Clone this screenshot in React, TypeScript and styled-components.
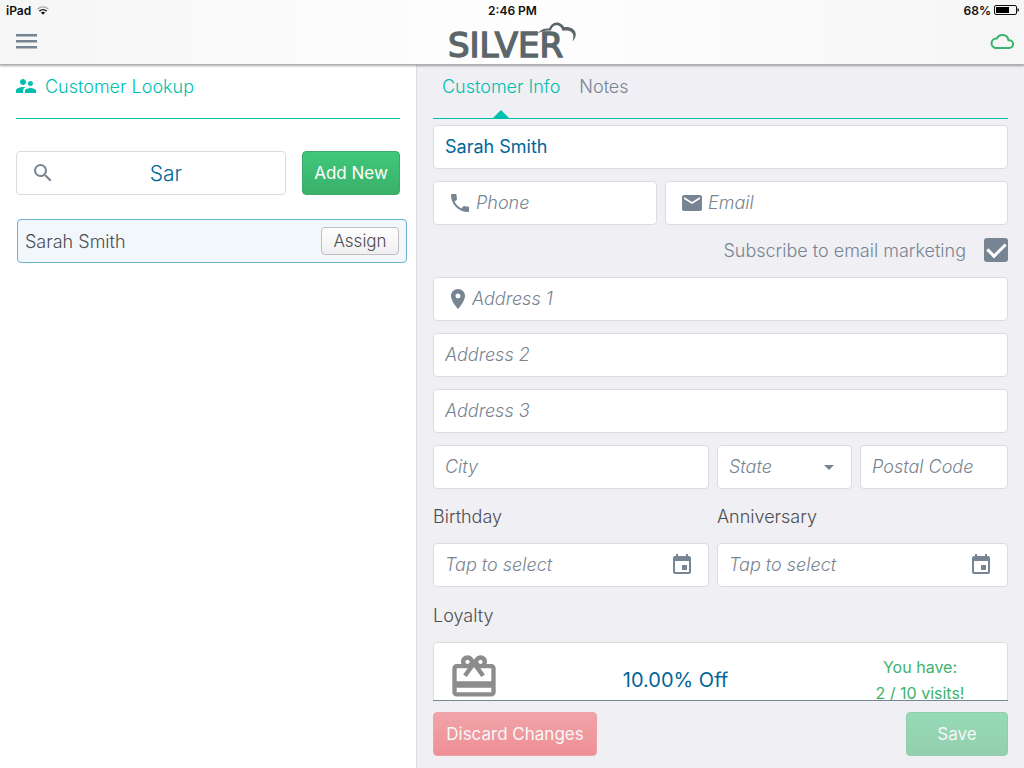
import React, { useState } from "react";
import styled, { createGlobalStyle, css } from "styled-components";
import {
  MdSupervisorAccount,
  MdSearch,
  MdPhone,
  MdEmail,
  MdLocationOn,
  MdArrowDropDown,
  MdEvent,
  MdCardGiftcard,
} from "react-icons/md";

const teal = "#00bfae";
const slate = "#778592";
const blue = "#006699";
const green = "#3bb36d";
const ink = "#4d4d52";
const paper = "#efeff4";
const line = "#dcdcdf";

const GlobalStyle = createGlobalStyle`
  * { box-sizing: border-box; }
  body { margin: 0; background: #fff; }
  body, button, input, select { font-family: Inter, "Liberation Sans", sans-serif; }
`;

const Page = styled.div`
  display: flex;
  flex-direction: column;
  height: 100vh;
  color: ${ink};
  font-size: 18px;
  font-weight: 300;
`;

const Header = styled.header`
  z-index: 1;
  background: linear-gradient(90deg, #f6f6f6, #fefefe 50%, #f6f6f6);
  border-bottom: 1px solid #b0b0b4;
  box-shadow: 0 1px 2px rgba(0, 0, 0, 0.35);
`;

const StatusBar = styled.div`
  display: grid;
  grid-template-columns: 1fr auto 1fr;
  align-items: center;
  height: 20px;
  padding: 0 5px 0 6px;
  color: #111;
  font-size: 12px;
  font-weight: 600;
`;

const StatusGroup = styled.div<{ $end?: boolean }>`
  display: flex;
  align-items: center;
  gap: ${(p) => (p.$end ? 3 : 6)}px;
  justify-content: ${(p) => (p.$end ? "flex-end" : "flex-start")};
`;

const NavBar = styled.div`
  display: grid;
  grid-template-columns: 1fr auto 1fr;
  align-items: center;
  height: 44px;
  padding: 0 10px 2px;
`;

const MenuButton = styled.button`
  display: flex;
  flex-direction: column;
  gap: 3px;
  width: 21px;
  margin-left: 6px;
  padding: 0;
  border: 0;
  background: none;
`;

const MenuLine = styled.span`
  height: 3px;
  border-bottom: 1px solid #b4bcc4;
  background: ${slate};
`;

const LogoMark = styled.svg`
  display: block;
  overflow: visible;
  font-family: "DejaVu Sans", Inter, sans-serif;
  font-size: 34px;
  font-weight: 400;
`;

const CloudStatus = styled.svg`
  justify-self: end;
`;

const Main = styled.main`
  display: grid;
  grid-template-columns: minmax(0, 417fr) minmax(0, 607fr);
  flex: 1;
  min-height: 0;
`;

const LookupPane = styled.section`
  padding: 0 16px;
  background: #fff;
  border-right: 1px solid ${line};
`;

const PaneTitle = styled.h1`
  display: flex;
  align-items: center;
  gap: 9px;
  height: 54px;
  margin: 0;
  padding-bottom: 11px;
  border-bottom: 1px solid ${teal};
  color: ${teal};
  font-size: 18px;
  font-weight: 300;
`;

const SearchRow = styled.div`
  display: flex;
  gap: 16px;
  margin: 32px 0 24px;
`;

const fieldBox = css`
  height: 44px;
  min-width: 0;
  border: 1px solid ${line};
  border-radius: 4px;
  background: #fff;
`;

const SearchField = styled.label`
  ${fieldBox}
  display: flex;
  flex: 1;
  align-items: center;
  gap: 4px;
  padding: 0 12px 0 14px;
  color: ${slate};
  svg { flex: none; }
`;

const SearchInput = styled.input`
  flex: 1;
  width: 100%;
  min-width: 0;
  padding: 0;
  border: 0;
  outline: 0;
  background: none;
  color: ${blue};
  font-size: 21px;
  font-weight: 300;
  text-align: center;
`;

const ActionButton = styled.button<{ $tone: "green" | "red"; $width: number; $faded?: boolean }>`
  width: ${(p) => p.$width}px;
  height: 44px;
  padding: 0;
  border: 1px solid ${(p) => (p.$tone === "green" ? "#3aaa66" : "#f0565a")};
  border-radius: 4px;
  background: ${(p) =>
    p.$tone === "green"
      ? "linear-gradient(#3ec87a, #3bb06a)"
      : "linear-gradient(#f25b5f, #ee3338)"};
  color: #fff;
  font-size: 17px;
  font-weight: 400;
  opacity: ${(p) => (p.$faded ? 0.5 : 1)};
`;

const ResultRow = styled.div`
  display: flex;
  align-items: center;
  justify-content: space-between;
  height: 44px;
  margin: 0 -7px 0 1px;
  padding: 0 7px;
  border: 1px solid #6cb2d0;
  border-radius: 4px;
  background: #f2f7fc;
`;

const AssignButton = styled.button`
  width: 78px;
  height: 28px;
  padding: 0;
  border: 1px solid #bfbfc3;
  border-radius: 4px;
  background: linear-gradient(#fff, #efefef);
  color: ${ink};
  font-size: 17px;
  font-weight: 300;
`;

const InfoPane = styled.section`
  display: flex;
  flex-direction: column;
  min-height: 0;
  padding: 0 16px 12px;
  background: ${paper};
`;

const Tabs = styled.nav`
  display: flex;
  flex: none;
  gap: 19px;
  height: 54px;
  padding-left: 9px;
  border-bottom: 1px solid ${teal};
`;

const Tab = styled.button<{ $active?: boolean }>`
  position: relative;
  padding: 0 0 11px;
  border: 0;
  background: none;
  color: ${(p) => (p.$active ? teal : slate)};
  font-size: 18px;
  font-weight: 300;
  ${(p) =>
    p.$active &&
    css`
      &::after {
        content: "";
        position: absolute;
        bottom: 0;
        left: calc(50% - 8px);
        border: 8px solid transparent;
        border-top-width: 0;
        border-bottom-color: ${teal};
      }
    `}
`;

const FormScroll = styled.form`
  flex: 1;
  min-height: 0;
  padding-top: 6px;
  overflow-y: auto;
  scrollbar-width: none;
  border-bottom: 1px solid ${slate};
`;

const Row = styled.div<{ $columns?: string }>`
  display: grid;
  grid-template-columns: ${(p) => p.$columns ?? "1fr"};
  gap: 8px;
  margin-bottom: 12px;
`;

const Field = styled.label<{ $icon?: boolean }>`
  ${fieldBox}
  display: flex;
  align-items: center;
  gap: 4px;
  padding: 0 14px 0 ${(p) => (p.$icon ? 14 : 11)}px;
  color: ${slate};
  svg { flex: none; }
`;

const PinIcon = styled(MdLocationOn)`
  width: 20px;
  height: 24px;
`;

const TextInput = styled.input`
  flex: 1;
  width: 100%;
  min-width: 0;
  padding: 0 0 2px;
  border: 0;
  outline: 0;
  background: none;
  color: ${blue};
  font-size: 18px;
  font-weight: 400;
  &::placeholder {
    color: ${slate};
    font-style: italic;
    font-weight: 300;
    opacity: 1;
  }
`;

const StateSelect = styled.select`
  flex: 1;
  min-width: 0;
  padding: 0 0 2px;
  border: 0;
  outline: 0;
  appearance: none;
  background: none;
  color: ${slate};
  font-size: 18px;
  font-style: italic;
  font-weight: 300;
`;

const StateField = styled(Field)`
  padding-right: 10px;
`;

const PostalField = styled(Field)`
  padding-right: 4px;
`;

const Subscribe = styled.label`
  display: flex;
  align-items: center;
  justify-content: flex-end;
  gap: 18px;
  height: 26px;
  margin-bottom: 14px;
  color: ${slate};
`;

const CheckBox = styled.input`
  appearance: none;
  display: grid;
  place-items: center;
  width: 24px;
  height: 24px;
  margin: 0;
  border-radius: 3px;
  background: ${slate};
  &:checked::before {
    content: "";
    width: 8px;
    height: 15px;
    margin-bottom: 5px;
    border: solid #fff;
    border-width: 0 3px 3px 0;
    transform: rotate(45deg);
  }
`;

const DateField = styled.div`
  display: flex;
  flex-direction: column;
  min-width: 0;
`;

const Caption = styled.label`
  height: 42px;
  line-height: 32px;
`;

const LoyaltyTitle = styled.h2`
  height: 43px;
  margin: 0;
  font-size: 18px;
  font-weight: 300;
  line-height: 34px;
`;

const LoyaltyCard = styled.div`
  display: grid;
  grid-template-columns: 84px 1fr 174px;
  align-items: center;
  height: 76px;
  border: 1px solid ${line};
  border-radius: 4px;
  background: #fff;
`;

const GiftCell = styled.div`
  display: flex;
  align-self: start;
  padding: 8px 14px;
  color: #8c8c8c;
`;

const Offer = styled.div`
  color: ${blue};
  font-size: 20px;
  font-weight: 400;
  text-align: center;
`;

const Visits = styled.div`
  color: ${green};
  font-size: 16px;
  font-weight: 400;
  line-height: 26px;
  text-align: center;
`;

const Footer = styled.footer`
  display: flex;
  flex: none;
  justify-content: space-between;
  padding-top: 11px;
`;

function Wifi() {
  return (
    <svg width="12" height="9" viewBox="0 0 12 9" fill="none" stroke="#111" strokeWidth="1.4">
      <path d="M.5 3.2Q6-1.4 11.5 3.2" stroke="#aaa" />
      <path d="M2.4 5.1Q6 2.2 9.6 5.1" />
      <path d="M6 8.8 3.9 6.6Q6 5 8.1 6.6z" fill="#111" stroke="none" />
    </svg>
  );
}

function Battery() {
  return (
    <svg width="25" height="10" viewBox="0 0 25 10">
      <rect x=".5" y=".5" width="22" height="9" rx="1.5" fill="none" stroke="#111" />
      <rect x="2" y="2" width="13" height="6" fill="#000" />
      <path d="M23.5 3q1.5.5 1.5 2t-1.5 2z" fill="#111" />
    </svg>
  );
}

function Logo() {
  return (
    <LogoMark width="130" height="38" viewBox="0 0 130 38" role="img" aria-label="Silver">
      <text x="1" y="35" fill="#5b666b" stroke="#5b666b" strokeWidth="1.5">
        SILVER
      </text>
      <path
        d="M90.5 11.6C93 8 97 6.2 102 6.6C103.500 2.8 106 .4 109.500 .4C113 .4 116 2.5 117.300 5.2C123 4.5 128 7 128.700 11.5C129 15 127.500 17.5 125.500 19.4C126.500 16 127 13.5 125.300 11C123.500 8.5 119.500 8.3 115.500 8.8C114.500 5.5 113 3.2 109.500 3.2C106.500 3.2 105 5.5 103.800 8.6C99 8 95 9 90.5 11.6Z"
        fill="#5b666b"
      />
    </LogoMark>
  );
}

function DatePicker({ id, label }: { id: string; label: string }) {
  return (
    <DateField>
      <Caption htmlFor={id}>{label}</Caption>
      <Field as="div">
        <TextInput id={id} placeholder="Tap to select" readOnly />
        <MdEvent size={24} />
      </Field>
    </DateField>
  );
}

export default function App() {
  const [query, setQuery] = useState("Sar");
  const [name, setName] = useState("Sarah Smith");
  const [subscribed, setSubscribed] = useState(true);

  return (
    <Page>
      <GlobalStyle />
      <Header>
        <StatusBar>
          <StatusGroup>
            <span>iPad</span>
            <Wifi />
          </StatusGroup>
          <span>2:46 PM</span>
          <StatusGroup $end>
            <span>68%</span>
            <Battery />
          </StatusGroup>
        </StatusBar>
        <NavBar>
          <MenuButton aria-label="Menu">
            <MenuLine />
            <MenuLine />
            <MenuLine />
          </MenuButton>
          <Logo />
          <CloudStatus width="24" height="16" viewBox="0 0 24 16" fill="none" stroke={green} strokeWidth="2">
            <path d="M5.5 15H19.2a3.9 3.9 0 0 0 0-7.8H18.5A6.2 6.2 0 0 0 6.8 5.5A4.8 4.8 0 0 0 5.5 15z" />
          </CloudStatus>
        </NavBar>
      </Header>

      <Main>
        <LookupPane>
          <PaneTitle>
            <MdSupervisorAccount viewBox="2 2 20 20" size={20} />
            Customer Lookup
          </PaneTitle>
          <SearchRow>
            <SearchField>
              <MdSearch size={24} />
              <SearchInput
                aria-label="Search customers"
                value={query}
                onChange={(e) => setQuery(e.target.value)}
              />
            </SearchField>
            <ActionButton $tone="green" $width={98}>Add New</ActionButton>
          </SearchRow>
          <ResultRow>
            <span>Sarah Smith</span>
            <AssignButton>Assign</AssignButton>
          </ResultRow>
        </LookupPane>

        <InfoPane>
          <Tabs>
            <Tab $active>Customer Info</Tab>
            <Tab>Notes</Tab>
          </Tabs>
          <FormScroll>
            <Row>
              <Field>
                <TextInput aria-label="Name" value={name} onChange={(e) => setName(e.target.value)} />
              </Field>
            </Row>
            <Row $columns="224fr 343fr">
              <Field $icon>
                <MdPhone size={24} />
                <TextInput aria-label="Phone" placeholder="Phone" />
              </Field>
              <Field $icon>
                <MdEmail size={24} />
                <TextInput aria-label="Email" placeholder="Email" />
              </Field>
            </Row>
            <Subscribe>
              Subscribe to email marketing
              <CheckBox
                type="checkbox"
                checked={subscribed}
                onChange={(e) => setSubscribed(e.target.checked)}
              />
            </Subscribe>
            <Row>
              <Field $icon>
                <PinIcon viewBox="2 0 20 24" />
                <TextInput aria-label="Address 1" placeholder="Address 1" />
              </Field>
            </Row>
            <Row>
              <Field>
                <TextInput aria-label="Address 2" placeholder="Address 2" />
              </Field>
            </Row>
            <Row>
              <Field>
                <TextInput aria-label="Address 3" placeholder="Address 3" />
              </Field>
            </Row>
            <Row $columns="276fr 135fr 148fr">
              <Field>
                <TextInput aria-label="City" placeholder="City" />
              </Field>
              <StateField>
                <StateSelect aria-label="State">
                  <option>State</option>
                </StateSelect>
                <MdArrowDropDown size={24} />
              </StateField>
              <PostalField>
                <TextInput aria-label="Postal Code" placeholder="Postal Code" />
              </PostalField>
            </Row>
            <Row $columns="276fr 291fr">
              <DatePicker id="birthday" label="Birthday" />
              <DatePicker id="anniversary" label="Anniversary" />
            </Row>
            <LoyaltyTitle>Loyalty</LoyaltyTitle>
            <LoyaltyCard>
              <GiftCell>
                <MdCardGiftcard size={52} />
              </GiftCell>
              <Offer>10.00% Off</Offer>
              <Visits>
                You have:
                <br />2 / 10 visits!
              </Visits>
            </LoyaltyCard>
          </FormScroll>
          <Footer>
            <ActionButton $tone="red" $width={164} $faded>Discard Changes</ActionButton>
            <ActionButton $tone="green" $width={102} $faded>Save</ActionButton>
          </Footer>
        </InfoPane>
      </Main>
    </Page>
  );
}
